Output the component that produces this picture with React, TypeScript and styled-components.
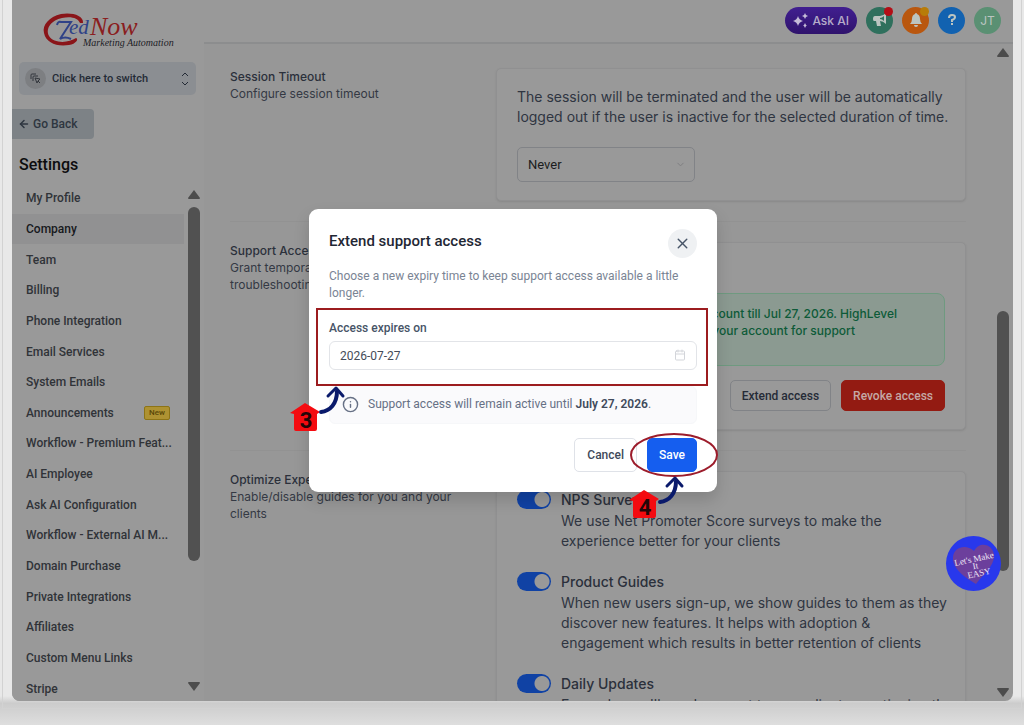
import React from "react";
import styled, { createGlobalStyle } from "styled-components";
import { ArrowLeft, Calendar, ChevronDown, Info, X } from "lucide-react";

const inter = `Inter, "Liberation Sans", sans-serif`;
const roboto = `Roboto, "Liberation Sans", sans-serif`;

const GlobalStyle = createGlobalStyle`
  * { box-sizing: border-box; }
  body { margin: 0; background: #e4e4e4; font-family: ${inter}; overflow: hidden; }
  h1, h2, h3, p, ul { margin: 0; padding: 0; }
  button, input, select { font: inherit; margin: 0; }
  a { color: inherit; text-decoration: none; }
`;

const Page = styled.div`
  height: 100vh;
  padding: 0 11px 24px 12px;
  background: linear-gradient(#e8e8e8 0 96%, #cccccc 97%, #dedede 100%);
`;

const Window = styled.div`
  position: relative;
  display: flex;
  height: 100%;
  background: #979797;
  border-radius: 0 0 8px 8px;
  overflow: hidden;
`;

const Frame = styled.div`
  position: absolute;
  inset: 0 2px 16px;
  border: 1px solid #d2d2d2;
  border-top: 0;
  pointer-events: none;
`;

const Sidebar = styled.aside`
  display: flex;
  flex-direction: column;
  flex: none;
  width: 192px;
  background: #999999;
  font-family: ${roboto};
`;

const Brand = styled.a`
  display: block;
  height: 62px;
  padding: 10px 0 0 30px;
`;

const Switcher = styled.button`
  display: flex;
  align-items: center;
  gap: 6px;
  height: 33px;
  margin: 0 8px 0 7px;
  padding: 0 6px;
  border: 0;
  border-radius: 5px;
  background: #8b8e92;
  color: #242b36;
  font-size: 11px;
  font-weight: 500;
  span { flex: 1; text-align: left; }
`;

const SwitchIcon = styled.svg`
  width: 21px;
  height: 21px;
  border-radius: 50%;
  background: #7d7f82;
`;

const BackButton = styled.button`
  display: flex;
  align-items: center;
  gap: 3px;
  width: 82px;
  height: 30px;
  margin-top: 14px;
  padding: 0 6px;
  border: 0;
  border-radius: 0 4px 4px 0;
  background: #7d8286;
  color: #2e3640;
  font-size: 12px;
  font-weight: 500;
`;

const SideTitle = styled.h2`
  margin: 16px 7px 8px;
  font-size: 16px;
  line-height: 20px;
  font-weight: 500;
  color: #0c0c0e;
`;

const SideBody = styled.div`
  display: flex;
  flex: 1;
  min-height: 0;
`;

const Nav = styled.nav`
  display: flex;
  flex: 1;
  min-width: 0;
  flex-direction: column;
  margin-bottom: -3px;
`;

const NavItem = styled.a<{ $active?: boolean }>`
  display: flex;
  flex: 1;
  align-items: center;
  justify-content: space-between;
  padding: 0 14px;
  background: ${(p) => (p.$active ? "#919192" : "transparent")};
  color: ${(p) => (p.$active ? "#17191d" : "#303338")};
  font-size: 12px;
  font-weight: 500;
  white-space: nowrap;
`;

const NewBadge = styled.span`
  padding: 0 4px;
  border: 1px solid #8d7416;
  border-radius: 2px;
  background: #ae9232;
  color: #594708;
  font-size: 8px;
  line-height: 12px;
`;

const Track = styled.div<{ $top: number; $bottom: number }>`
  display: flex;
  flex: none;
  flex-direction: column;
  align-items: center;
  width: 20px;
  padding: ${(p) => p.$top}px 0 ${(p) => p.$bottom}px;
`;

const Thumb = styled.div<{ $before: number; $size: number; $after: number }>`
  display: flex;
  flex: 1;
  flex-direction: column;
  &::before { content: ""; flex: ${(p) => p.$before}; }
  &::after { content: ""; flex: ${(p) => p.$after}; }
  i { flex: ${(p) => p.$size}; width: 12px; border-radius: 6px; background: #515151; }
`;

const Arrow = styled.svg<{ $down?: boolean }>`
  width: 12px;
  height: 9px;
  fill: #4c4c4c;
  transform: ${(p) => (p.$down ? "rotate(180deg)" : "none")};
`;

const Main = styled.main`
  display: flex;
  flex: 1;
  min-width: 0;
  flex-direction: column;
`;

const TopBar = styled.header`
  display: flex;
  flex: none;
  align-items: center;
  justify-content: flex-end;
  gap: 9px;
  height: 44px;
  padding: 0 12px 2px 0;
  border-bottom: 2px solid #8c8d8e;
  background: #999999;
`;

const AskButton = styled.button`
  display: flex;
  align-items: center;
  gap: 4px;
  height: 27px;
  padding: 0 8px;
  border: 0;
  border-radius: 14px;
  background: linear-gradient(#411f90, #2f136c);
  color: #b5acc9;
  font-size: 12px;
  font-weight: 500;
`;

const RoundButton = styled.button<{ $bg: string; $dot?: string }>`
  position: relative;
  display: flex;
  align-items: center;
  justify-content: center;
  width: 27px;
  height: 27px;
  padding: 0;
  border: 0;
  border-radius: 50%;
  background: ${(p) => p.$bg};
  color: #bcc5c1;
  font-size: 12px;
  &::after {
    content: "";
    display: ${(p) => (p.$dot ? "block" : "none")};
    position: absolute;
    top: 0;
    right: 0;
    width: 9px;
    height: 9px;
    border-radius: 50%;
    background: ${(p) => p.$dot};
  }
`;

const Body = styled.div`
  display: flex;
  flex: 1;
  min-height: 0;
`;

const Sections = styled.div`
  flex: 1;
  min-width: 0;
  padding: 24px 27px 0 26px;
  overflow: hidden;
`;

const Section = styled.section`
  display: grid;
  grid-template-columns: minmax(0, 266fr) minmax(0, 470fr);
  & + & {
    margin-top: 20px;
    padding-top: 20px;
    border-top: 1px solid #929292;
  }
`;

const Intro = styled.div`
  padding-right: 36px;
  color: #343944;
  font-size: 12px;
  line-height: 17px;
  h3 { font-size: 12px; font-weight: 500; color: #2b303b; }
`;

const Card = styled.div`
  padding: 18px 8px 18px 20px;
  border: 1px solid #909091;
  border-radius: 5px;
  background: #999999;
  box-shadow: 0 1px 2px #888888;
  color: #2f3541;
  font-size: 14px;
  line-height: 20px;
`;

const SelectWrap = styled.label`
  position: relative;
  display: block;
  width: 178px;
  margin-top: 20px;
  select {
    display: block;
    appearance: none;
    width: 100%;
    height: 35px;
    padding: 0 10px;
    border: 1px solid #818387;
    border-radius: 5px;
    background: #999999;
    color: #1b1d20;
    font-family: ${roboto};
    font-size: 13px;
  }
  svg { position: absolute; right: 9px; top: 12px; color: #7d7d7f; }
`;

const Alert = styled.p`
  min-height: 73px;
  margin: 32px 12px 0 0;
  padding: 11px 47px 0 0;
  border: 1px solid #6f9a80;
  border-radius: 8px;
  background: #8b9a91;
  color: #0d5a38;
  font-size: 12px;
  line-height: 17px;
  font-weight: 500;
  text-align: right;
  span { display: block; }
  span + span { padding-right: 42px; }
`;

const Actions = styled.div<{ $right?: number }>`
  display: flex;
  justify-content: flex-end;
  gap: 10px;
  margin-top: 14px;
  margin-right: ${(p) => p.$right || 0}px;
`;

const Button = styled.button<{ $tone?: "danger" | "primary" | "light" }>`
  height: ${(p) => (p.$tone === "primary" || p.$tone === "light" ? 34 : 31)}px;
  padding: 0 ${(p) => (p.$tone === "light" ? 12 : 11)}px;
  border: 1px solid ${(p) => ({ danger: "#931b12", primary: "#155eef", light: "#dfe2e8", none: "#818387" })[p.$tone || "none"]};
  border-radius: 5px;
  background: ${(p) => ({ danger: "#931b12", primary: "#155eef", light: "#ffffff", none: "#999999" })[p.$tone || "none"]};
  color: ${(p) => ({ danger: "#c4a9a6", primary: "#ffffff", light: "#3f4a5a", none: "#252b37" })[p.$tone || "none"]};
  font-family: ${roboto};
  font-size: 12px;
  font-weight: 500;
`;

const Guides = styled.ul`
  display: flex;
  flex-direction: column;
  gap: 21px;
  list-style: none;
`;

const Guide = styled.li`
  display: grid;
  grid-template-columns: 35px 1fr;
  column-gap: 9px;
  h3 { font-size: 14px; line-height: 20px; font-weight: 500; color: #2b303b; }
  p { margin-top: 1px; }
`;

const Toggle = styled.input`
  appearance: none;
  width: 34px;
  height: 19px;
  margin: 0;
  border-radius: 10px;
  background: radial-gradient(circle at 25px 50%, #999999 0 7px, #1042a4 8px);
`;

const Bubble = styled.button`
  position: absolute;
  right: 12px;
  bottom: 110px;
  width: 55px;
  height: 55px;
  padding: 0;
  border: 0;
  border-radius: 50%;
  background: #2838ec;
  svg { display: block; }
`;

const Overlay = styled.div`
  position: absolute;
  inset: 0;
  display: flex;
  align-items: center;
  justify-content: center;
  padding-left: 1px;
  font-family: ${roboto};
  pointer-events: none;
`;

const Modal = styled.div`
  position: relative;
  width: 408px;
  padding: 20px;
  border-radius: 9px;
  background: #ffffff;
  box-shadow: 0 8px 16px rgba(0, 0, 0, 0.15);
  pointer-events: auto;
`;

const ModalHead = styled.div`
  display: flex;
  justify-content: space-between;
  h1 { font-size: 15px; line-height: 24px; font-weight: 500; color: #1f2734; }
`;

const Close = styled.button`
  display: flex;
  align-items: center;
  justify-content: center;
  width: 29px;
  height: 29px;
  padding: 0;
  border: 0;
  border-radius: 50%;
  background: #eff1f3;
  color: #475467;
`;

const Hint = styled.p`
  margin-top: 10px;
  color: #7a8494;
  font-size: 12px;
  line-height: 17px;
`;

const Field = styled.div`
  position: relative;
  margin-top: 18px;
  label { display: block; color: #475467; font-size: 12px; line-height: 17px; font-weight: 500; }
  input {
    width: 100%;
    height: 29px;
    margin-top: 4px;
    padding: 0 10px;
    border: 1px solid #e2e4e8;
    border-radius: 6px;
    color: #454c58;
    font-size: 12px;
  }
  svg { position: absolute; right: 11px; bottom: 9px; color: #d3d5da; }
`;

const Notice = styled.p`
  display: flex;
  gap: 9px;
  height: 38px;
  margin-top: 16px;
  padding: 9px 12px;
  border: 1px solid #f6f7f9;
  border-radius: 6px;
  background: #fafafc;
  color: #667085;
  font-size: 12px;
  line-height: 17px;
  b { font-weight: 600; color: #414b5c; }
`;

const RedBox = styled.div`
  position: absolute;
  inset: 99px 9px auto 7px;
  height: 78px;
  border: 2px solid #9c1c1f;
  pointer-events: none;
`;

const Marks = styled.svg`
  position: absolute;
  left: -20px;
  bottom: -30px;
  overflow: visible;
  pointer-events: none;
`;

const navItems = [
  "My Profile", "Company", "Team", "Billing", "Phone Integration", "Email Services",
  "System Emails", "Announcements", "Workflow - Premium Feat...", "AI Employee",
  "Ask AI Configuration", "Workflow - External AI M...", "Domain Purchase",
  "Private Integrations", "Affiliates", "Custom Menu Links", "Stripe",
];

const guides = [
  ["NPS Surveys", "We use Net Promoter Score surveys to make the experience better for your clients"],
  ["Product Guides", "When new users sign-up, we show guides to them as they discover new features. It helps with adoption & engagement which results in better retention of clients"],
  ["Daily Updates", "Every day we'll send a report to your clients mentioning the"],
];

type ScrollbarProps = { before: number; size: number; after: number; top: number; bottom: number };

function Scrollbar({ before, size, after, top, bottom }: ScrollbarProps) {
  const path = "M6 0 L12 8 Q12 9 11 9 H1 Q0 9 0 8 Z";
  return (
    <Track $top={top} $bottom={bottom}>
      <Arrow viewBox="0 0 12 9"><path d={path} /></Arrow>
      <Thumb $before={before} $size={size} $after={after}><i /></Thumb>
      <Arrow $down viewBox="0 0 12 9"><path d={path} /></Arrow>
    </Track>
  );
}

function Logo() {
  return (
    <svg width="140" height="40" viewBox="0 0 140 40" fontFamily='"Liberation Serif", serif' fontStyle="italic">
      <path d="M41 13 C42 5 29 2 19 4 C7 7 0 15 2 23 C4 33 15 37 27 35 C34 34 37 29 34 28 C27 33 12 34 7 26 C3 18 10 10 20 8 C29 6 36 8 38 13Z" fill="#8a1519" />
      <path d="M15 15 Q16 11 19 12 H29 L18 29 Q23 26 29 29" fill="none" stroke="#2f4287" strokeWidth="2" />
      <text x="27" y="24" fontSize="21" fill="#2f4287">ed</text>
      <text x="48" y="25" fontSize="26" fill="#8a1d20">Now</text>
      <text x="41" y="36" fontSize="10" fill="#1c1c26">Marketing Automation</text>
    </svg>
  );
}

function House({ x, y, digit }: { x: number; y: number; digit: string }) {
  return (
    <g transform={`translate(${x} ${y})`}>
      <path d="M0 10 L15 0 L30 9 L27 11 V26 Q27 28 25 28 H6 Q4 28 4 26 V11 Z" fill="#f40b10" />
      <text x="16" y="25" textAnchor="middle" fontFamily={roboto} fontSize="22" fontWeight="700" fill="#230608">{digit}</text>
    </g>
  );
}

function CurvedArrow({ x, y }: { x: number; y: number }) {
  return (
    <g transform={`translate(${x} ${y})`} fill="none" stroke="#0a1a6b" strokeLinecap="round" strokeLinejoin="round">
      <path d="M0 25 C9 24 16 17 16 4" strokeWidth="4" />
      <path d="M7 9 L15 1 L22 9" strokeWidth="3" />
    </g>
  );
}

export default function App() {
  return (
    <Page>
      <GlobalStyle />
      <Frame />
      <Window>
        <Sidebar>
          <Brand href="#" aria-label="Home"><Logo /></Brand>
          <Switcher>
            <SwitchIcon viewBox="0 0 21 21" fill="none" stroke="#33373d">
              <path d="M6 11 V7 Q6 6 7 6 H11 M8 13 V9 Q8 8 9 8 H13 M10 10 L15 11 L13 13 L15 15 M10 10 L12 15 L13 13" />
            </SwitchIcon>
            <span>Click here to switch</span>
            <svg width="10" height="14" viewBox="0 0 10 14" fill="none" stroke="currentColor">
              <path d="M2 4 L5 1 L8 4 M2 10 L5 13 L8 10" />
            </svg>
          </Switcher>
          <BackButton><ArrowLeft size={12} strokeWidth={3} />Go Back</BackButton>
          <SideTitle>Settings</SideTitle>
          <SideBody>
            <Nav>
              {navItems.map((name) => (
                <NavItem key={name} href="#" $active={name === "Company"}>
                  {name}
                  {name === "Announcements" && <NewBadge>New</NewBadge>}
                </NavItem>
              ))}
            </Nav>
            <Scrollbar before={8} size={353} after={121} top={7} bottom={10} />
          </SideBody>
        </Sidebar>
        <Main>
          <TopBar>
            <AskButton>
              <svg width="15" height="15" viewBox="0 0 15 15" fill="#c5bcd8">
                <path d="M5 3 Q6 7 10 8 Q6 9 5 13 Q4 9 0 8 Q4 7 5 3Z M12 0 L13 2 L15 3 L13 4 L12 6 L11 4 L9 3 L11 2Z M12 10 L13 12 L14 12 L13 13 L12 15 L11 13 L10 12 L11 12Z" />
              </svg>
              Ask AI
            </AskButton>
            <RoundButton $bg="#2f705d" $dot="#b30e16" aria-label="Announcements">
              <svg width="16" height="16" viewBox="0 0 16 16" fill="currentColor" fillRule="evenodd">
                <path d="M14 1 V12 Q11 9 8 9 L9 14 H5 L4 9 H2 Q1 9 1 7 Q1 4 3 4 H8 Q11 4 14 1Z M8 6 V7 Q10 7 12 9 V4 Q10 6 8 6Z" />
              </svg>
            </RoundButton>
            <RoundButton $bg="#b9570f" $dot="#b87c08" aria-label="Notifications">
              <svg width="16" height="16" viewBox="0 0 16 16" fill="currentColor">
                <path d="M8 1 Q9 1 9 2 Q12 3 12 7 Q12 10 14 12 H2 Q4 10 4 7 Q4 3 7 2 Q7 1 8 1Z M6 13 H10 Q10 15 8 15 Q6 15 6 13Z" />
              </svg>
            </RoundButton>
            <RoundButton $bg="#1262b0" aria-label="Help">
              <svg width="10" height="14" viewBox="0 0 10 14" fill="none" stroke="currentColor" strokeWidth="2">
                <path d="M2 5 Q2 2 5 2 Q8 2 8 4 Q8 6 5 7 V9 M5 10 V12" />
              </svg>
            </RoundButton>
            <RoundButton $bg="#5a9073">JT</RoundButton>
          </TopBar>
          <Body>
            <Sections>
              <Section>
                <Intro><h3>Session Timeout</h3><p>Configure session timeout</p></Intro>
                <Card>
                  <p>The session will be terminated and the user will be automatically logged out if the user is inactive for the selected duration of time.</p>
                  <SelectWrap>
                    <select aria-label="Session timeout"><option>Never</option></select>
                    <ChevronDown size={11} />
                  </SelectWrap>
                </Card>
              </Section>
              <Section>
                <Intro><h3>Support Access</h3><p>Grant temporary access for troubleshooting</p></Intro>
                <Card>
                  <Alert><span>your account till Jul 27, 2026. HighLevel</span><span>can access your account for support</span></Alert>
                  <Actions $right={12}>
                    <Button>Extend access</Button>
                    <Button $tone="danger">Revoke access</Button>
                  </Actions>
                </Card>
              </Section>
              <Section>
                <Intro><h3>Optimize Experience</h3><p>Enable/disable guides for you and your clients</p></Intro>
                <Card>
                  <Guides>
                    {guides.map(([title, text]) => (
                      <Guide key={title}>
                        <Toggle type="checkbox" defaultChecked aria-label={title} />
                        <div><h3>{title}</h3><p>{text}</p></div>
                      </Guide>
                    ))}
                  </Guides>
                </Card>
              </Section>
            </Sections>
            <Scrollbar before={254} size={260} after={117} top={4} bottom={4} />
          </Body>
        </Main>
        <Overlay>
          <Modal role="dialog" aria-labelledby="extend-title">
            <ModalHead>
              <h1 id="extend-title">Extend support access</h1>
              <Close aria-label="Close"><X size={17} /></Close>
            </ModalHead>
            <Hint>Choose a new expiry time to keep support access available a little longer.</Hint>
            <Field>
              <label htmlFor="expires">Access expires on</label>
              <input id="expires" type="text" defaultValue="2026-07-27" />
              <Calendar size={12} />
            </Field>
            <Notice>
              <Info size={17} />
              <span>Support access will remain active until <b>July 27, 2026</b>.</span>
            </Notice>
            <Actions>
              <Button $tone="light">Cancel</Button>
              <Button $tone="primary">Save</Button>
            </Actions>
            <RedBox />
            <Marks width="432" height="140" viewBox="0 0 432 140">
              <ellipse cx="385" cy="73" rx="43" ry="21" fill="none" stroke="#9c1c2b" strokeWidth="2" />
              <House x={1} y={21} digit="3" />
              <CurvedArrow x={32} y={5} />
              <House x={340} y={108} digit="4" />
              <CurvedArrow x={371} y={95} />
            </Marks>
          </Modal>
        </Overlay>
        <Bubble aria-label="Open chat">
          <svg width="55" height="55" viewBox="0 0 55 55">
            <path d="M28 15 C34 4 48 9 48 20 C48 31 37 38 30 48 C20 42 6 33 7 21 C8 10 21 8 28 15Z" fill="#6c3f9c" />
            <g transform="rotate(-12 28 28)" fill="#ece4f5" fontFamily='"Liberation Serif", serif' fontSize="9" textAnchor="middle">
              <text x="29" y="26">Let's Make</text>
              <text x="29" y="33">It</text>
              <text x="31" y="41">EASY</text>
            </g>
          </svg>
        </Bubble>
      </Window>
    </Page>
  );
}
